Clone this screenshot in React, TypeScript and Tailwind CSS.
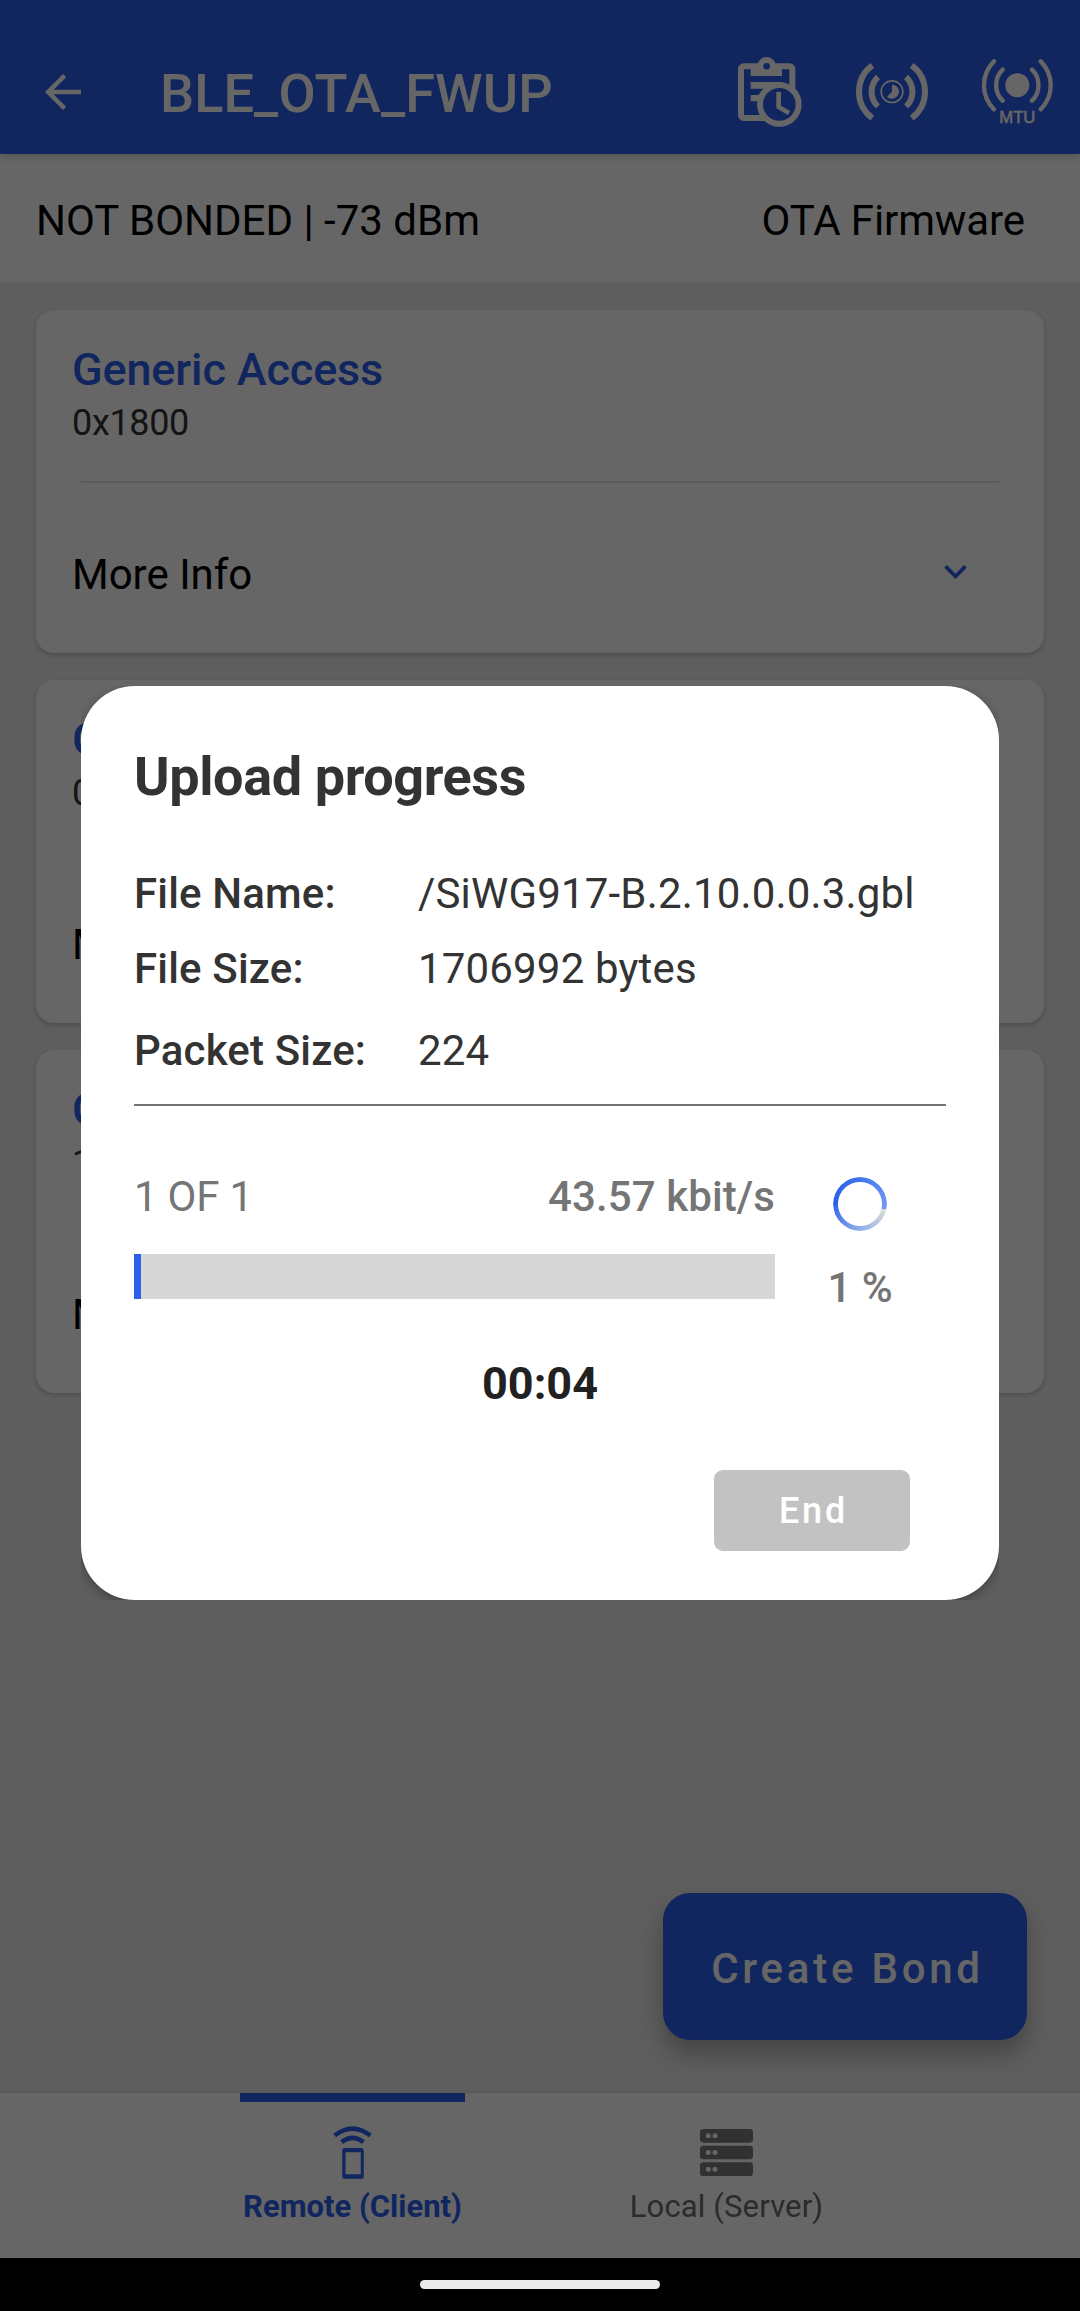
import type { ReactNode } from "react";

type Service = { name: string; uuid: string };

const services: Service[] = [
  { name: "Generic Access", uuid: "0x1800" },
  { name: "Generic Attribute", uuid: "0x1801" },
  { name: "OTA Service", uuid: "1D14D6EE-FD63-4FA1-BFA4-8F47B42119F0" },
];

const files = [
  { label: "File Name:", value: "/SiWG917-B.2.10.0.0.3.gbl", gap: "mt-[60px]" },
  { label: "File Size:", value: "1706992 bytes", gap: "mt-[25px]" },
  { label: "Packet Size:", value: "224", gap: "mt-8" },
];

function BackIcon() {
  return (
    <svg viewBox="0 0 24 24" className="size-[54px] fill-white">
      <path d="M20 11H7.83l5.59-5.59L12 4l-8 8 8 8 1.41-1.41L7.83 13H20z" />
    </svg>
  );
}

function ClipboardClockIcon() {
  return (
    <svg viewBox="108 72 204 222" className="h-[74px] w-[68px]">
      <rect x="123" y="106" width="154" height="155" rx="8" fill="none" stroke="#fff" strokeWidth="18" />
      <path d="M152 110h94v25h-94z" fill="#fff" />
      <circle cx="200" cy="106" r="28" fill="#fff" />
      <circle cx="200" cy="106" r="10" className="fill-[#2b60ea]" />
      <path d="M152 153h94v20h-94zM152 192h34v19h-34z" fill="#fff" />
      <path d="M194 171l-22 24 14 10 20-24z" fill="#fff" />
      <circle cx="238" cy="220" r="58" className="fill-[#2b60ea]" stroke="#fff" strokeWidth="18" />
      <path d="M236 183v45l31 18" fill="none" stroke="#fff" strokeWidth="14" />
    </svg>
  );
}

function AdvertisingIntervalIcon() {
  return (
    <svg viewBox="465 90 222 186" className="h-[62px] w-[74px]" fill="none" stroke="#fff" strokeWidth="18">
      <path d="M517 103a98 98 0 0 0 0 158M635 103a98 98 0 0 1 0 158" />
      <path d="M534 138a60 60 0 0 0 0 88M618 138a60 60 0 0 1 0 88" />
      <circle cx="576" cy="182" r="32.500" strokeWidth="5" />
      <path d="M576 161a21 21 0 1 1-15 36l15-15z" fill="#fff" stroke="none" />
    </svg>
  );
}

function MtuIcon() {
  return (
    <svg viewBox="840 80 225 207" className="h-[69px] w-[75px]">
      <g fill="none" stroke="#fff" strokeWidth="13" strokeLinecap="round">
        <path d="M882 93a101 101 0 0 0 0 144M1022 93a101 101 0 0 1 0 144" />
        <path d="M908 118a65 65 0 0 0 0 93M996 118a65 65 0 0 1 0 93" />
      </g>
      <circle cx="952" cy="165" r="36" fill="#fff" />
      <text
        x="952"
        y="279"
        textAnchor="middle"
        fill="#fff"
        stroke="#fff"
        strokeWidth="1.500"
        fontSize="50"
        fontFamily="Liberation Sans, sans-serif"
      >
        MTU
      </text>
    </svg>
  );
}

function RemoteIcon() {
  return (
    <svg viewBox="393 162 130 171" className="h-[57px] w-[43px]">
      <g fill="none" stroke="#2b60ea" strokeWidth="14">
        <path d="M404 196Q458 154 512 196" />
        <path d="M425 216Q458 190 491 216" />
      </g>
      <path
        fill="#2b60ea"
        fillRule="evenodd"
        d="M435 234h49q8 0 8 8v77q0 8-8 8h-49q-8 0-8-8v-77q0-8 8-8zM437 247v66h46v-66z"
      />
    </svg>
  );
}

function ServerIcon() {
  return (
    <svg viewBox="303 177 159 141" className="h-[47px] w-[53px]">
      {[177, 227, 277].map((y) => (
        <g key={y}>
          <rect x="303" y={y} width="159" height="41" rx="10" fill="#7a7a7a" />
          <circle cx="328" cy={y + 20.5} r="7.500" fill="#fff" />
          <circle cx="348" cy={y + 20.5} r="7.500" fill="#fff" />
        </g>
      ))}
    </svg>
  );
}

function ServiceCard({ name, uuid }: Service) {
  return (
    <section className="flex h-[343px] shrink-0 flex-col overflow-hidden rounded-[18px] bg-white pt-[33px] pr-[45px] pl-9 shadow-[0_2px_5px_rgba(0,0,0,0.2)]">
      <h2 className="text-[45px] leading-[54px] font-medium tracking-[-0.15px] text-[#2b60ea]">{name}</h2>
      <p className="mt-[5px] text-[36px] leading-[42px] tracking-[-0.35px] whitespace-nowrap text-[#333]">{uuid}</p>
      <hr className="mt-[37px] ml-[9px] h-0.5 shrink-0 border-0 bg-[#e1e1e1]" />
      <div className="mt-[66px] flex items-start justify-between pr-[21px]">
        <span className="pt-0.5 text-[42px] leading-[48px] text-black">More Info</span>
        <svg viewBox="0 0 24 24" className="size-[45px] fill-[#2b60ea]">
          <path d="M16.590 8.590L12 13.170 7.410 8.590 6 10l6 6 6-6z" />
        </svg>
      </div>
    </section>
  );
}

function NavItem({ icon, label, active }: { icon: ReactNode; label: string; active?: boolean }) {
  return (
    <div className="flex w-[374px] flex-col items-center">
      <div className={active ? "h-[9px] w-[225px] bg-[#2b60ea]" : "h-[9px] w-[225px]"} />
      <div className="mt-[22px] flex h-[57px] items-center">{icon}</div>
      <span
        className={
          active
            ? "mt-1.5 text-[31px] leading-10 font-bold text-[#2b60ea]"
            : "mt-1.5 text-[31px] leading-10 tracking-[0.15px] text-[#6c6c6c]"
        }
      >
        {label}
      </span>
    </div>
  );
}

function UploadDialog() {
  return (
    <div className="h-[914px] w-[918px] overflow-hidden">
      <div className="flex h-full flex-col rounded-[54px] bg-white px-[53px] pt-[59px] text-[42px] leading-[50px] shadow-[0_4px_12px_rgba(0,0,0,0.3)]">
        <h1 className="text-[54px] leading-[64px] font-bold tracking-[-0.4px] text-[#333]">Upload progress</h1>
        {files.map((f) => (
          <div key={f.label} className={`flex tracking-[0.17px] whitespace-nowrap text-[#333] ${f.gap}`}>
            <span className="w-[284px] font-medium">{f.label}</span>
            <span>{f.value}</span>
          </div>
        ))}
        <hr className="mt-7 h-0.5 shrink-0 border-0 bg-[#737373]" />
        <div className="flex text-[#757575]">
          <div className="w-[641px] pt-[66px]">
            <div className="flex justify-between">
              <span className="tracking-[-0.2px]">1 OF 1</span>
              <span className="font-medium tracking-[0.1px]">43.57 kbit/s</span>
            </div>
            <div className="mt-8 h-[45px] bg-[#d7d7d7]">
              <div className="h-full w-[7px] bg-[#2b60ea]" />
            </div>
          </div>
          <div className="flex flex-1 flex-col items-center pt-[71px] pr-px">
            <div className="size-[54px] rounded-full bg-[conic-gradient(from_102deg,#dcdcdc,#8fafea_22%,#2b60ea_48%,#3f73ee_70%,#749bf3)] [mask:radial-gradient(closest-side,transparent_21.5px,black_22.5px)]" />
            <span className="mt-8 font-medium">1 %</span>
          </div>
        </div>
        <div className="mt-11 text-center text-[45px] leading-[54px] font-bold text-[#212121]">00:04</div>
        <button className="mt-[59px] mr-9 h-[81px] w-[196px] self-end rounded-[9px] bg-[#c2c2c2] pl-[3px] text-[36px] font-medium tracking-[2.8px] text-white">
          End
        </button>
      </div>
    </div>
  );
}

export default function App() {
  return (
    <div className="flex h-[2311px] w-[1080px] flex-col overflow-hidden bg-black font-['Roboto',sans-serif]">
      <div className="relative flex h-[2258px] flex-col bg-[#ebebeb]">
        <header className="z-10 flex h-[154px] shrink-0 items-center bg-[#2b60ea] pt-[29px] pr-[25px] pl-9 text-white shadow-[0_2px_8px_rgba(0,0,0,0.22)]">
          <BackIcon />
          <span className="ml-[70px] pt-1 text-[54px] leading-[60px] font-medium tracking-[0.12px]">BLE_OTA_FWUP</span>
          <div className="ml-auto flex items-center gap-[51px]">
            <ClipboardClockIcon />
            <AdvertisingIntervalIcon />
            <MtuIcon />
          </div>
        </header>
        <div className="flex h-[129px] shrink-0 items-center justify-between bg-white pt-1 pr-[55px] pl-9 text-[42px] text-black">
          <span>NOT BONDED | -73 dBm</span>
          <span className="tracking-[-0.1px]">OTA Firmware</span>
        </div>
        <main className="flex flex-1 flex-col gap-[27px] px-9 pt-[27px]">
          {services.map((s) => (
            <ServiceCard key={s.name} {...s} />
          ))}
          <button className="mt-auto mr-[17px] mb-[53px] h-[147px] w-[364px] self-end rounded-[27px] bg-[#2b60ea] pt-1 pl-[5px] text-[42px] font-medium tracking-[3.75px] text-white shadow-[0_14px_24px_rgba(0,0,0,0.28)]">
            Create Bond
          </button>
        </main>
        <nav className="flex h-[165px] shrink-0 justify-center bg-white pr-px shadow-[0_-1px_3px_rgba(0,0,0,0.1)]">
          <NavItem icon={<RemoteIcon />} label="Remote (Client)" active />
          <NavItem icon={<ServerIcon />} label="Local (Server)" />
        </nav>
        <div className="absolute inset-0 z-20 flex items-start justify-center bg-black/60 pt-[686px]">
          <UploadDialog />
        </div>
      </div>
      <div className="flex flex-1 items-center justify-center">
        <div className="h-[9px] w-60 rounded-full bg-[#ebebeb]" />
      </div>
    </div>
  );
}
